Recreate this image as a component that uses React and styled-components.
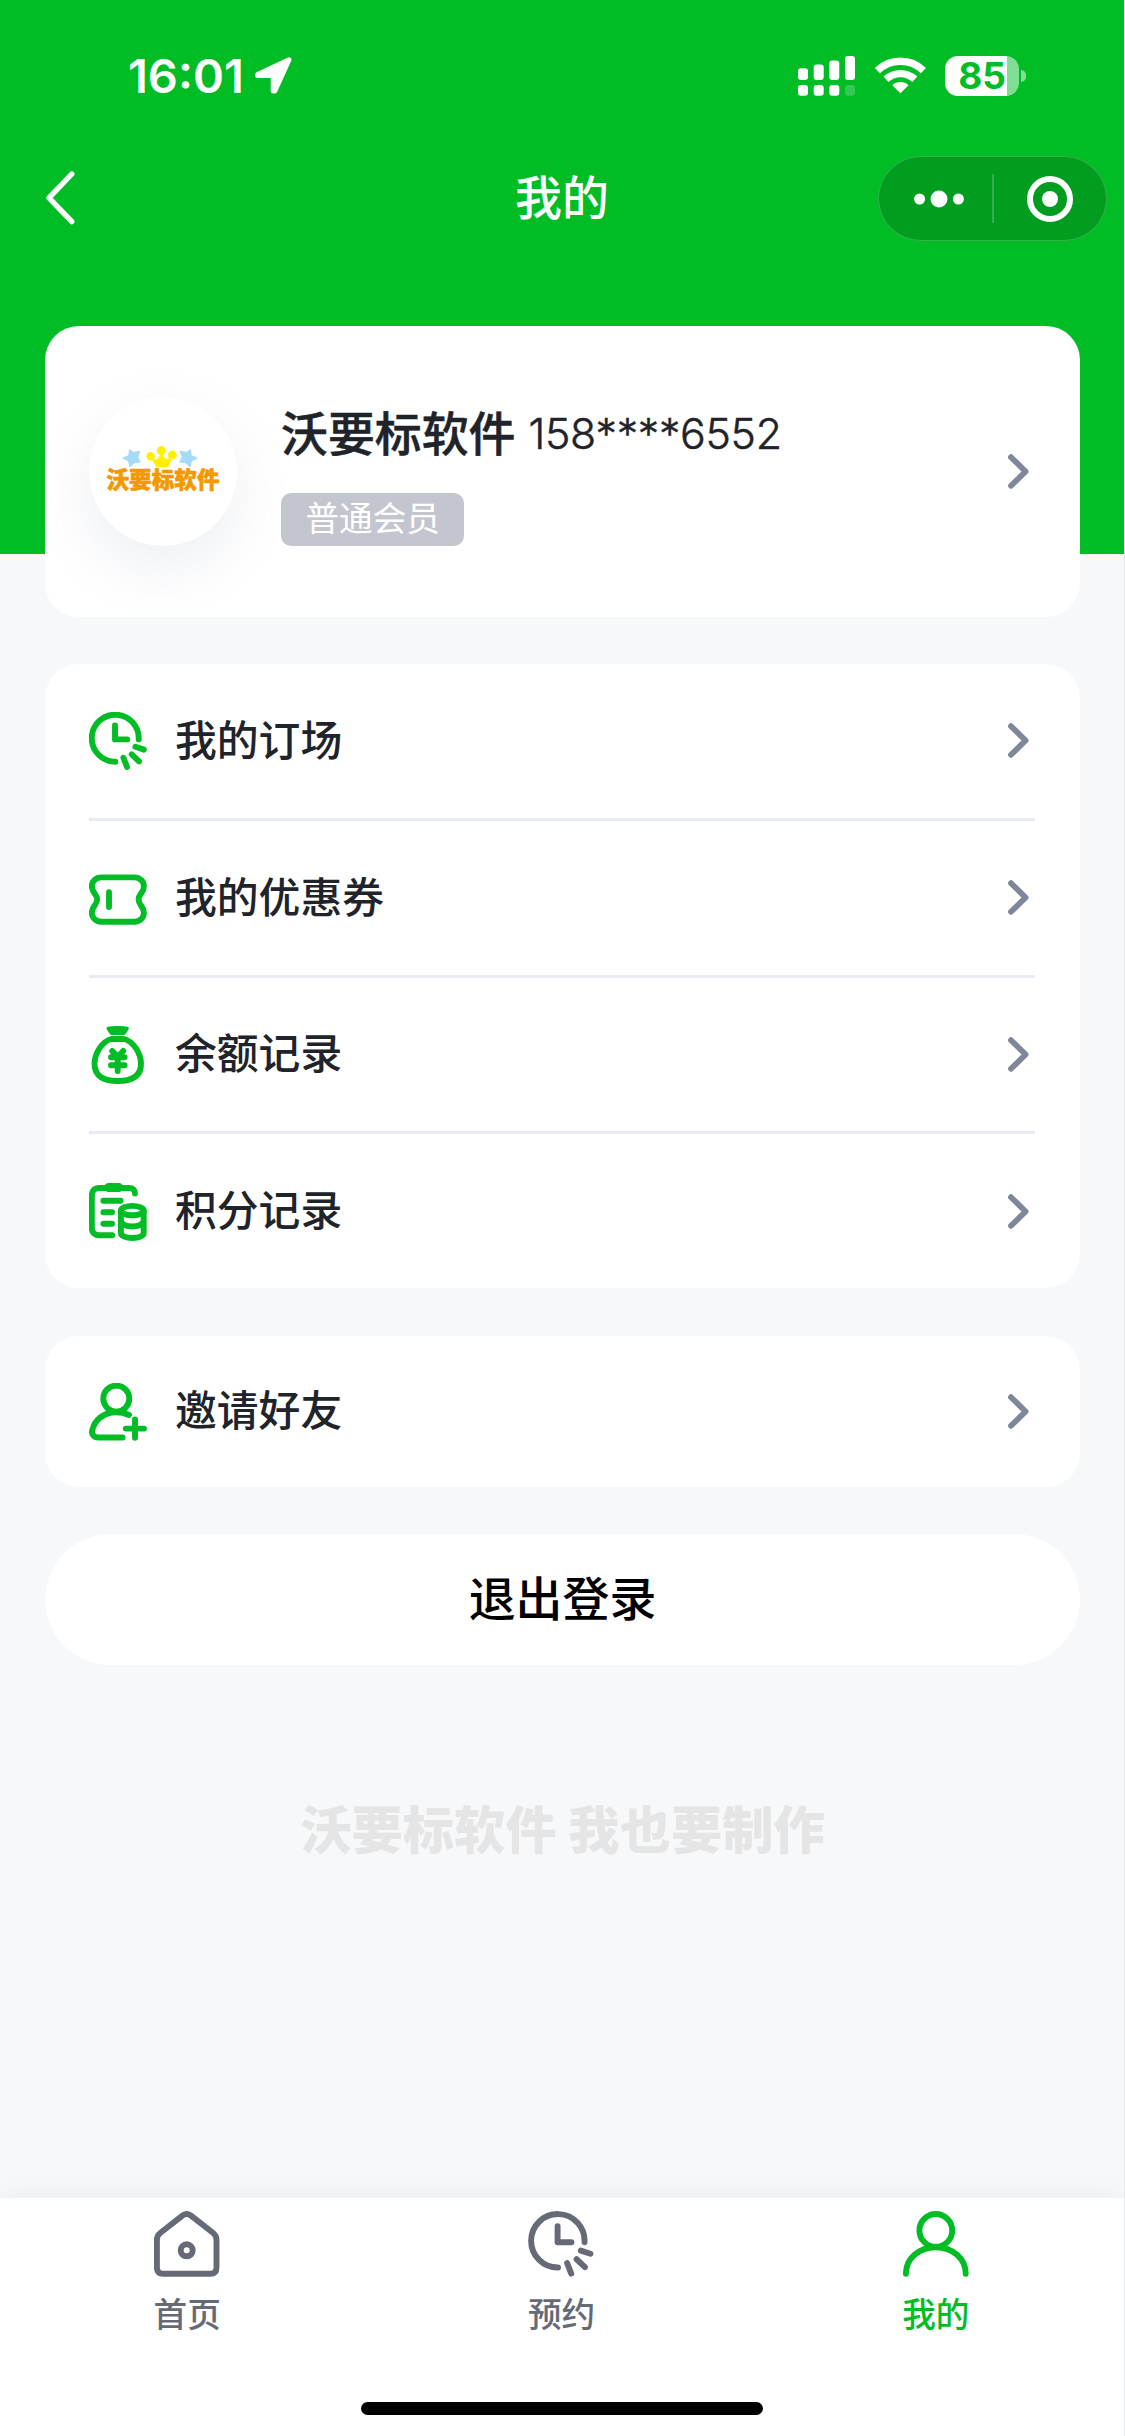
import React from 'react';
import styled, { createGlobalStyle } from 'styled-components';

const GREEN = '#00bd26';

const GlobalStyle = createGlobalStyle`
  * {
    box-sizing: border-box;
  }

  body {
    margin: 0;
    font-family: "Noto Sans CJK SC", "Noto Sans", sans-serif;
    -webkit-font-smoothing: antialiased;
  }

  svg {
    display: block;
    flex-shrink: 0;
  }
`;

const Screen = styled.div`
  display: flex;
  flex-direction: column;
  width: 1125px;
  height: 2436px;
  overflow: hidden;
  background: #f6f8fa;
  border-right: 1px solid #e6e7ea;
`;

const Header = styled.header`
  flex-shrink: 0;
  height: 554px;
  background: ${GREEN};
`;

const StatusBar = styled.div`
  display: flex;
  align-items: center;
  justify-content: space-between;
  height: 156px;
  padding: 0 98px 5px 128px;
`;

const StatusGroup = styled.div`
  display: flex;
  align-items: center;
  gap: ${({ $gap }) => $gap}px;
`;

const Time = styled.span`
  padding-top: 1px;
  font-family: Inter, sans-serif;
  font-size: 47px;
  font-weight: 600;
  line-height: 56px;
  color: #fff;
`;

const Battery = styled.div`
  display: flex;
  align-items: center;
  gap: 2px;
`;

const BatteryBody = styled.div`
  display: flex;
  align-items: center;
  justify-content: center;
  width: 74px;
  height: 40px;
  border-radius: 13px;
  background: linear-gradient(to right, #fff 84%, rgba(255, 255, 255, 0.5) 84%);
  font-family: Inter, sans-serif;
  font-size: 37px;
  font-weight: 700;
  line-height: 40px;
  color: ${GREEN};
`;

const BatteryCap = styled.div`
  width: 5px;
  height: 12px;
  border-radius: 0 6px 6px 0;
  background: rgba(255, 255, 255, 0.5);
`;

const NavBar = styled.div`
  display: grid;
  grid-template-columns: 1fr auto 1fr;
  align-items: center;
  height: 85px;
  padding: 0 17px;
`;

const BackButton = styled.div`
  padding: 0 0 1px 29px;
`;

const Title = styled.h1`
  margin: 0;
  padding-bottom: 8px;
  font-size: 46.9px;
  font-weight: 500;
  line-height: 64px;
  color: #fff;
`;

const Capsule = styled.div`
  display: flex;
  align-items: center;
  justify-self: end;
  width: 229px;
  height: 85px;
  border: 1px solid rgba(255, 255, 255, 0.2);
  border-radius: 43px;
  background: #009d1f;
`;

const CapsuleButton = styled.div`
  display: flex;
  align-items: center;
  justify-content: center;
  width: 113px;
  padding-left: ${({ $inset }) => $inset || 0}px;
`;

const CapsuleDivider = styled.div`
  width: 2px;
  height: 49px;
  background: rgba(255, 255, 255, 0.2);
`;

const Content = styled.main`
  display: flex;
  flex: 1;
  flex-direction: column;
  margin-top: -228px;
  padding: 0 44px 0 45px;
`;

const Card = styled.section`
  flex-shrink: 0;
  padding: 0 45px 0 44px;
  margin-bottom: ${({ $gap }) => $gap}px;
  border-radius: 34px;
  background: #fff;
`;

const Profile = styled(Card)`
  display: flex;
  align-items: center;
  height: 291px;
  padding-right: 51px;
`;

const Avatar = styled.div`
  display: flex;
  flex-direction: column;
  align-items: center;
  width: 148px;
  height: 149px;
  padding-top: 49px;
  border-radius: 50%;
  background: #fff;
  box-shadow: 0 22px 60px rgba(90, 105, 150, 0.11);
`;

const LogoPicture = styled.div`
  padding-right: 7px;
`;

const LogoText = styled.span`
  margin-top: -2px;
  font-size: 22.6px;
  font-weight: 900;
  line-height: 26px;
  white-space: nowrap;
  color: #f39800;
  -webkit-text-stroke: 0.6px #f39800;
`;

const ProfileInfo = styled.div`
  display: flex;
  flex: 1;
  flex-direction: column;
  align-items: flex-start;
  gap: 30px;
  padding: 2px 0 0 44px;
`;

const NameLine = styled.div`
  display: flex;
  gap: 13px;
  height: 64px;
  color: #202329;
`;

const Name = styled.span`
  font-size: 46.9px;
  font-weight: 500;
  line-height: 65px;
  -webkit-text-stroke: 0.5px #202329;
`;

const Phone = styled.span`
  font-family: Inter, sans-serif;
  font-size: 42.8px;
  font-weight: 300;
  line-height: 69px;
  letter-spacing: -0.3px;
  -webkit-text-stroke: 0.5px #202329;
`;

const Badge = styled.span`
  height: 53px;
  padding: 0 24.5px;
  border-radius: 10px;
  background: #c4c6cf;
  font-size: 33.6px;
  font-weight: 400;
  line-height: 48px;
  color: #fff;
`;

const Row = styled.div`
  display: flex;
  align-items: center;
  height: ${({ $last }) => ($last ? 154 : 156.75)}px;
  padding-right: 6px;
  border-bottom: ${({ $last }) => ($last ? 0 : 3)}px solid #e8ebf5;
`;

const InviteRow = styled(Row)`
  height: 151px;
`;

const RowLabel = styled.span`
  flex: 1;
  margin-left: 28px;
  padding-bottom: ${({ $lift }) => $lift || 6}px;
  font-size: 41.8px;
  font-weight: 500;
  line-height: 60px;
  color: #202329;
`;

const LogoutButton = styled.button`
  flex-shrink: 0;
  height: 131px;
  padding: 0 0 7px;
  border: 0;
  border-radius: 66px;
  background: #fff;
  font-family: inherit;
  font-size: 46.9px;
  font-weight: 500;
  color: #000;
`;

const Watermark = styled.p`
  margin: 125px 0 0;
  font-size: 51.3px;
  font-weight: 900;
  line-height: 74px;
  text-align: center;
  color: #e5e5e5;
`;

const TabBar = styled.nav`
  display: flex;
  flex-direction: column;
  flex-shrink: 0;
  align-items: center;
  justify-content: space-between;
  height: 238px;
  padding: 13px 0 21px;
  background: #fff;
  box-shadow: 0 0 30px rgba(0, 0, 0, 0.06);
`;

const Tabs = styled.div`
  display: grid;
  grid-template-columns: repeat(3, 1fr);
  width: 100%;
  padding-right: 1px;
`;

const Tab = styled.div`
  display: flex;
  flex-direction: column;
  align-items: center;
  gap: 11px;
  font-size: 33.6px;
  font-weight: 500;
  line-height: 50px;
  color: ${({ $active }) => ($active ? GREEN : '#656a76')};
`;

const HomeIndicator = styled.div`
  width: 402px;
  height: 13px;
  border-radius: 7px;
  background: #000;
`;

const RowIcon = styled.span`
  padding-top: 1px;
  color: ${GREEN};
`;

const Stroke = ({ size = 58, box = 58, width = 5.9, children }) => (
  <svg
    width={size}
    height={size}
    viewBox={`0 0 ${box} ${box}`}
    fill="none"
    stroke="currentColor"
    strokeWidth={width}
    strokeLinecap="round"
    strokeLinejoin="round"
  >
    {children}
  </svg>
);

const ClockIcon = ({ size, width }) => (
  <Stroke size={size} width={width}>
    <path d="M49.7 27.4A23.5 23.5 0 1 0 26.4 49.7" />
    <path d="M26 13.4V27.4H38.2" />
    <path d="M46.4 34.8L54.9 37.6M42.7 42.4L50 49.4M34.4 45.8L38 55" />
  </Stroke>
);

const TicketIcon = () => (
  <Stroke>
    <path d="M12.3 8.4H45.4C50.8 8.4 54.9 12.4 54.9 17.2C54.9 24 49.6 24.6 49.6 30.5C49.6 36.4 54.9 37 54.9 43.8C54.9 48.8 50.8 52.7 45.4 52.7H12.3C6.9 52.7 2.8 48.8 2.8 43.8C2.8 37 8.1 36.4 8.1 30.5C8.1 24.6 2.8 24 2.8 17.2C2.8 12.4 6.9 8.4 12.3 8.4Z" />
    <path d="M20 23.2V38" />
  </Stroke>
);

const MoneyIcon = () => (
  <Stroke>
    <path
      d="M17.8 3.2C16.9 1.4 18.4 .6 20.4 .4Q28.7 -.5 37 .4C39 .6 40.4 1.4 39.6 3.2Q38.4 6 35.6 9H21.8Q19 6 17.8 3.2Z"
      fill="currentColor"
      stroke="none"
    />
    <path d="M22.4 13H35C44.6 15.5 52 27.5 52 38C52 51 41.5 55 28.7 55C16 55 5.5 51 5.5 38C5.5 27.5 12.8 15.5 22.4 13Z" />
    <path d="M23.2 25L28.7 30.5L34.2 25M28.7 31V45M22 31.2H35.6M22 39.3H35.6" />
  </Stroke>
);

const PointsIcon = () => (
  <Stroke>
    <path d="M46 10.4C46 7 43.6 5 40.4 5H10.4C5.6 5 2.8 7.8 2.8 12.4V45C2.8 49.4 5.6 52.2 10.4 52.2H23.3" />
    <rect x="15.4" y="0" width="18.6" height="9" rx="4.2" fill="currentColor" stroke="none" />
    <path d="M14.4 17.8H31.6M14.4 29.3H23M14.4 40.8H23" />
    <ellipse cx="43.3" cy="27.6" rx="11.4" ry="4.7" />
    <path d="M31.9 28V50C31.9 53 36.8 55 43.3 55S54.7 53 54.7 50V28M31.9 38.5C34 42.2 38 43.5 43.3 43.5S52.6 42.2 54.7 38.5" />
  </Stroke>
);

const InviteIcon = () => (
  <Stroke>
    <circle cx="27.3" cy="15.6" r="13" />
    <path d="M40 32C36 30 31.6 29.2 27 29.2C14 29.2 5.4 37.6 3.2 47.4C2.2 51.6 5 54.5 9.4 54.5H33.6" />
    <path d="M46 36.4V54.8M36.8 45.6H55" />
  </Stroke>
);

const HomeIcon = () => (
  <Stroke size={66} box={66}>
    <path d="M28.4 4.6L6.2 22Q2.9 24.6 2.9 28.8V56.4Q2.9 62.7 9.2 62.7H56.2Q62.5 62.7 62.5 56.4V28.8Q62.5 24.6 59.2 22L37 4.6Q32.7 1.4 28.4 4.6Z" />
    <circle cx="32.7" cy="39.3" r="6" />
  </Stroke>
);

const UserIcon = () => (
  <Stroke size={66} box={66}>
    <circle cx="32.8" cy="19.4" r="16.4" />
    <path d="M2.9 62.8C2.9 47.6 16 36.2 32.8 36.2S62.7 47.6 62.7 62.8" />
  </Stroke>
);

const Chevron = () => (
  <svg width="21" height="35" viewBox="0 0 21 35" fill="none" stroke="#81879a" strokeWidth="5.8" strokeLinecap="round" strokeLinejoin="round">
    <path d="M3 3.2L17.6 17.5L3 31.8" />
  </svg>
);

const BackIcon = () => (
  <svg width="29" height="54" viewBox="0 0 29 54" fill="none" stroke="#fff" strokeWidth="5.4" strokeLinecap="round" strokeLinejoin="round">
    <path d="M25.8 3L3 26.8L25.8 50.6" />
  </svg>
);

const LocationIcon = () => (
  <svg width="37" height="37" viewBox="0 0 37 37" fill="#fff" stroke="#fff" strokeWidth="5" strokeLinejoin="round">
    <path d="M34 2.8L2.6 17.4V18.4H18.2V34H19.8Z" />
  </svg>
);

const SignalIcon = () => (
  <svg width="58" height="40" viewBox="0 0 58 40" fill="#fff">
    <rect x="0" y="12.3" width="10" height="11.8" rx="3" />
    <rect x="15.7" y="8.6" width="10" height="15.5" rx="3" />
    <rect x="31.3" y="4.6" width="10" height="19.5" rx="3" />
    <rect x="47" y="0" width="10" height="24.1" rx="3" />
    <rect x="0" y="29" width="10" height="10.7" rx="3" />
    <rect x="15.7" y="29" width="10" height="10.7" rx="3" />
    <rect x="31.3" y="29" width="10" height="10.7" rx="3" />
    <rect x="47" y="29" width="10" height="10.7" rx="3" opacity="0.2" />
  </svg>
);

const WifiIcon = () => (
  <svg width="51" height="37" viewBox="0 0 51 37" fill="none" stroke="#fff" strokeWidth="7.4">
    <path d="M2.4 13.6A33 33 0 0 1 48.4 13.6" />
    <path d="M11 22.3A21 21 0 0 1 39.8 22.3" />
    <path d="M25.4 36.2L17.3 28.2A11.6 11.6 0 0 1 33.5 28.2Z" fill="#fff" stroke="none" />
  </svg>
);

const DotsIcon = () => (
  <svg width="50" height="18" viewBox="0 0 50 18" fill="#fff">
    <circle cx="5.6" cy="9" r="5.5" />
    <circle cx="25" cy="9" r="8.5" />
    <circle cx="44.4" cy="9" r="5.5" />
  </svg>
);

const TargetIcon = () => (
  <svg width="46" height="46" viewBox="0 0 46 46">
    <circle cx="23" cy="23" r="20" fill="none" stroke="#fff" strokeWidth="6" />
    <circle cx="23" cy="23" r="8" fill="#fff" />
  </svg>
);

// Crown between two tilted stars, drawn above the brand name
const LogoMark = () => (
  <svg width="76" height="22" viewBox="0 0 76 22">
    <g fill="#a4dbf8" stroke="#a4dbf8" strokeWidth="1.4" strokeLinejoin="round">
      <path d="M7.6 4L11.6 6.8L17.6 5.4L15.6 10.8L18 16L12.4 16.2L8 20.4L6.8 14.8L1.2 12.2L7 9.6Z" />
      <path d="M68.4 4L64.4 6.8L58.4 5.4L60.4 10.8L58 16L63.6 16.2L68 20.4L69.2 14.8L74.8 12.2L69 9.6Z" />
    </g>
    <g fill="#fff000">
      <circle cx="39.4" cy="4.6" r="4.5" />
      <circle cx="28.6" cy="10.2" r="4.2" />
      <circle cx="50.4" cy="9" r="4.4" />
      <path d="M29 12.5L33.5 13.5Q37.5 13 38 7H41Q41.5 13 45.4 12.8L50.5 11.5Q48.6 16 46.6 20Q46 21 44.6 21H35.6Q34.2 21 33.6 20Q31.6 16 29 12.5Z" />
    </g>
  </svg>
);

const menu = [
  { label: '我的订场', Icon: ClockIcon },
  { label: '我的优惠券', Icon: TicketIcon },
  { label: '余额记录', Icon: MoneyIcon },
  { label: '积分记录', Icon: PointsIcon },
];

const App = () => {
  return (
    <Screen>
      <GlobalStyle />
      <Header>
        <StatusBar>
          <StatusGroup $gap={11}>
            <Time>16:01</Time>
            <LocationIcon />
          </StatusGroup>
          <StatusGroup $gap={19}>
            <SignalIcon />
            <WifiIcon />
            <Battery>
              <BatteryBody>85</BatteryBody>
              <BatteryCap />
            </Battery>
          </StatusGroup>
        </StatusBar>
        <NavBar>
          <BackButton><BackIcon /></BackButton>
          <Title>我的</Title>
          <Capsule>
            <CapsuleButton $inset={7}><DotsIcon /></CapsuleButton>
            <CapsuleDivider />
            <CapsuleButton><TargetIcon /></CapsuleButton>
          </Capsule>
        </NavBar>
      </Header>

      <Content>
        <Profile $gap={47}>
          <Avatar>
            <LogoPicture><LogoMark /></LogoPicture>
            <LogoText>沃要标软件</LogoText>
          </Avatar>
          <ProfileInfo>
            <NameLine>
              <Name>沃要标软件</Name>
              <Phone>158****6552</Phone>
            </NameLine>
            <Badge>普通会员</Badge>
          </ProfileInfo>
          <Chevron />
        </Profile>

        <Card $gap={48}>
          {menu.map(({ label, Icon }, i) => (
            <Row key={label} $last={i === menu.length - 1}>
              <RowIcon><Icon /></RowIcon>
              <RowLabel>{label}</RowLabel>
              <Chevron />
            </Row>
          ))}
        </Card>

        <Card $gap={47}>
          <InviteRow $last>
            <RowIcon><InviteIcon /></RowIcon>
            <RowLabel $lift={8}>邀请好友</RowLabel>
            <Chevron />
          </InviteRow>
        </Card>

        <LogoutButton>退出登录</LogoutButton>
        <Watermark>沃要标软件 我也要制作</Watermark>
      </Content>

      <TabBar>
        <Tabs>
          <Tab>
            <HomeIcon />
            首页
          </Tab>
          <Tab>
            <ClockIcon size={66} width={5.2} />
            预约
          </Tab>
          <Tab $active>
            <UserIcon />
            我的
          </Tab>
        </Tabs>
        <HomeIndicator />
      </TabBar>
    </Screen>
  );
};

export default App;
